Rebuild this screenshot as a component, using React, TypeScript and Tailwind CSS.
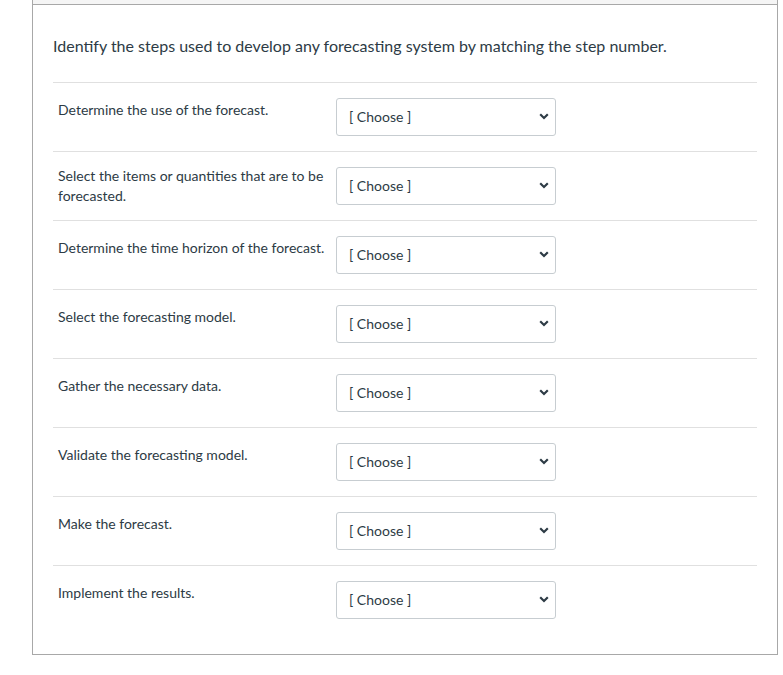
import React from "react";

const rows = [
  { label: "Determine the use of the forecast.", pad: "pt-[17px]" },
  { label: "Select the items or quantities that are to be forecasted.", pad: "pt-[14px]" },
  { label: "Determine the time horizon of the forecast.", pad: "pt-[17px]" },
  { label: "Select the forecasting model.", pad: "pt-[17px]" },
  { label: "Gather the necessary data.", pad: "pt-[17px]" },
  { label: "Validate the forecasting model.", pad: "pt-[17px]" },
  { label: "Make the forecast.", pad: "pt-[17px]" },
  { label: "Implement the results.", pad: "pt-[17px]" },
];

function Chevron() {
  return (
    <svg width="10" height="7" viewBox="0 0 10 7" className="text-[#2d3b45]">
      <path d="M1.2 1.3 L5 5 L8.8 1.3" fill="none" stroke="currentColor" strokeWidth="2.2" />
    </svg>
  );
}

export default function App() {
  return (
    <div className="min-h-screen bg-white font-['Lato','Liberation_Sans',sans-serif] text-[#2d3b45]">
      <div className="ml-[32px] w-[746px] border-x border-b border-[#a8a8a8]">
        {/* header strip, mostly scrolled out of view */}
        <div className="h-[5px] border-b border-[#a8a8a8] bg-[#f5f5f5]" />

        <div className="px-[20px] pb-[20px] pt-[29px]">
          <p className="text-[16px] leading-[24px]">
            Identify the steps used to develop any forecasting system by matching the step number.
          </p>

          <div className="mt-[24px]">
            {rows.map((r) => (
              <div key={r.label} className="flex h-[69px] items-start border-t border-[#e0e0e0] pl-[5px]">
                <div className={`w-[270px] text-[14px] leading-[20px] ${r.pad}`}>{r.label}</div>
                <div className="ml-[8px] mt-[15px] flex h-[38px] w-[220px] items-center justify-between rounded-[3px] border border-[#c7cdd1] bg-white pb-[1px] pl-[12px] pr-[6px] text-[14px]">
                  <span>[ Choose ]</span>
                  <Chevron />
                </div>
              </div>
            ))}
          </div>
        </div>
      </div>
    </div>
  );
}
